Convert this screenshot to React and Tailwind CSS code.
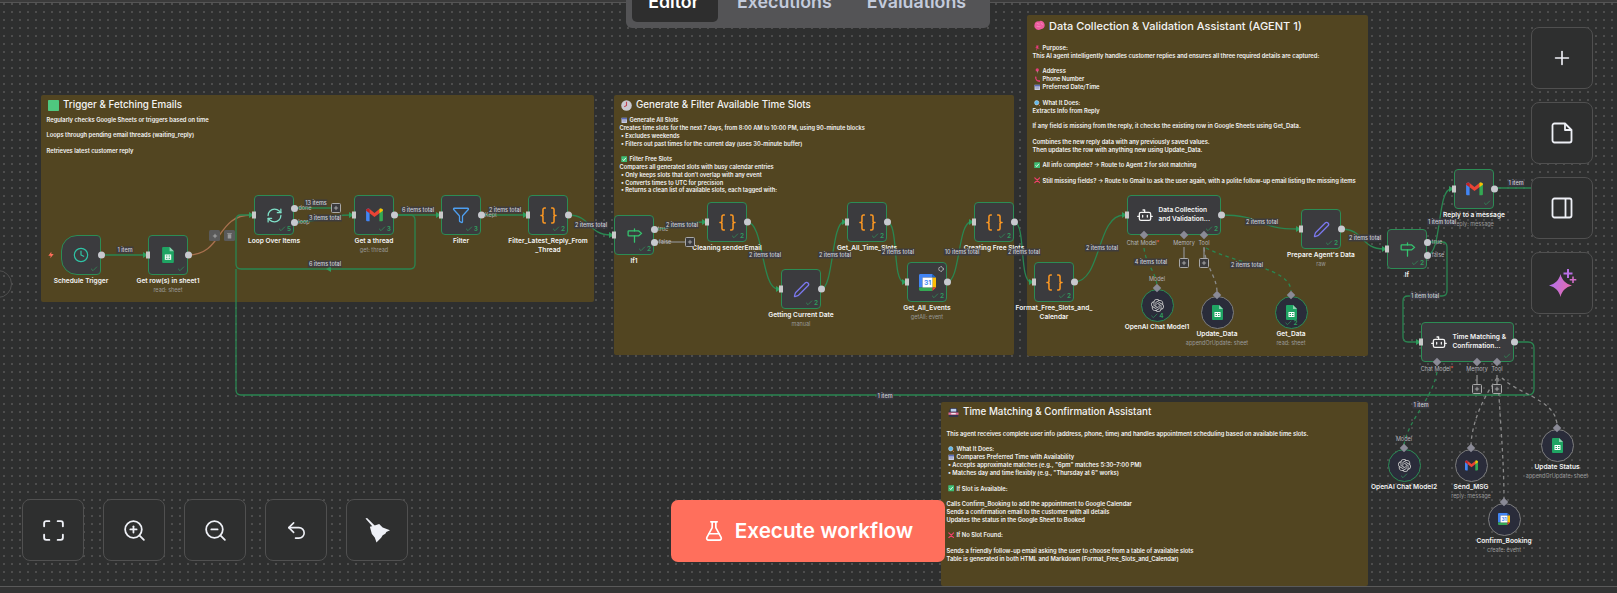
import React from 'react';
import { Plus, ZoomIn, ZoomOut, Undo2, FlaskConical, RefreshCw, Clock, Filter, Pen, Check } from 'lucide-react';
import { SiOpenai } from 'react-icons/si';

const s = (x1, y1, x2, y2) => {
  const d = Math.max(12, Math.abs(x2 - x1) * 0.55);
  return `M${x1} ${y1} C${x1 + d} ${y1} ${x2 - d} ${y2} ${x2} ${y2}`;
};
const G = '#2a8651';
const edges = [
  ['M101 255 H145', G],
  [s(188, 255, 251, 215), '#a8704e'],
  ['M294 208 H331', G],
  [s(294, 222, 351, 215), G],
  ['M394 215 H438', G],
  ['M394 215 H410 Q415 215 415 220 V264 Q415 269 410 269 H241 Q236 269 236 264 V220 Q236 215 241 215 H251', G],
  ['M481 215 H525', G],
  [s(568, 215, 611, 235), G],
  ['M654 229 C675 229 685 222 704 222', G],
  ['M654 242 H685', '#8a8a8a'],
  [s(747, 222, 778, 289), G],
  [s(821, 289, 844, 222), G],
  [s(887, 222, 904, 282), G],
  [s(947, 282, 971, 222), G],
  [s(1014, 222, 1031, 282), G],
  [s(1074, 282, 1124, 215), G],
  [s(1221, 215, 1298, 229), G],
  [s(1341, 229, 1384, 249), G],
  ['M1427 242 H1442 Q1447 242 1447 247 V291 Q1447 296 1442 296 H1408 Q1403 296 1403 301 V337 Q1403 342 1408 342 H1418', G],
  ['M1427 255 C1442 255 1437 189 1451 189', G],
  ['M1494 188 H1531', G],
  ['M236 269 V390 Q236 395 241 395 H1528 Q1534 395 1534 389 V348 Q1534 342 1528 342 H1514', G],
  ['M1184 247 V258', '#8a8a8a'],
  ['M1204 247 V258', '#8a8a8a'],
  ['M1477 375 V384', '#8a8a8a'],
  ['M1497 375 V384', '#8a8a8a'],
];
const dashed = [
  ['M1144 248 C1146 265 1155 270 1157 285', G],
  ['M1204 248 C1206 268 1216 275 1217 291', '#8a8a8a'],
  ['M1206 248 C1240 265 1290 268 1291 291', G],
  ['M1437 372 C1432 400 1408 420 1404 445', G],
  ['M1497 378 C1485 395 1472 420 1471 445', '#8a8a8a'],
  ['M1498 378 C1500 420 1504 460 1504 499', '#8a8a8a'],
  ['M1502 378 C1520 395 1556 400 1557 425', '#8a8a8a'],
];
const arrows = [[148, 255], [254, 215], [354, 215], [441, 215], [528, 215], [614, 235], [707, 222], [781, 289], [847, 222], [907, 282], [974, 222], [1034, 282], [1127, 215], [1301, 229], [1387, 249], [1454, 189], [1421, 342]];

const Sheets = ({ c = 'w-[11px] h-[15px]' }) => (
  <svg viewBox="0 0 22 30" className={c}><path d="M2 0H14L22 8V28a2 2 0 0 1-2 2H2a2 2 0 0 1-2-2V2a2 2 0 0 1 2-2z" fill="#1fa463" /><path d="M14 0L22 8H14z" fill="#8ed1b1" /><path d="M5 14H17V24H5z" fill="#fff" /><path d="M7 16H10V18H7zM12 16H15V18H12zM7 20H10V22H7zM12 20H15V22H12z" fill="#1fa463" /></svg>
);
const Gmail = ({ c = 'w-[17px] h-[14px]' }) => (
  <svg viewBox="0 0 24 20" className={c}>
    <path d="M0 3.5C0 1 3 0 5 1.5V19H1.5A1.5 1.5 0 0 1 0 17.5z" fill="#4285f4" />
    <path d="M24 3.5C24 1 21 0 19 1.5V19H22.5A1.5 1.5 0 0 0 24 17.5z" fill="#34a853" />
    <path d="M5 1.5L12 7L19 1.5V7.5L12 13L5 7.5z" fill="#ea4335" />
    <path d="M19 1.5C21 0 24 1 24 3.5V4L19 7.5z" fill="#fbbc04" />
    <path d="M0 3.5V4L5 7.5V1.5C3 0 0 1 0 3.5z" fill="#c5221f" />
  </svg>
);
const Braces = () => (
  <svg viewBox="0 0 24 24" className="w-[19px] h-[19px]" fill="none" stroke="#ff9922" strokeWidth="1.9" strokeLinecap="round" strokeLinejoin="round"><path d="M8 2.5H7a2 2 0 0 0-2 2v5a2 2 0 0 1-2.5 2.5A2 2 0 0 1 5 14.5v5a2 2 0 0 0 2 2h1" /><path d="M16 2.5h1a2 2 0 0 1 2 2v5a2 2 0 0 0 2.5 2.5 2 2 0 0 0-2.5 2.5v5a2 2 0 0 1-2 2h-1" /></svg>
);
const Sign = () => (
  <svg viewBox="0 0 24 24" className="w-[17px] h-[17px]" fill="none" stroke="#35c46f" strokeWidth="1.8" strokeLinejoin="round" strokeLinecap="round"><path d="M3 6.5a1 1 0 0 1 1-1h14l4 3.5-4 3.5H4a1 1 0 0 1-1-1z" /><path d="M12 2.5v3M12 12.5v9" /></svg>
);
const Bot = () => (
  <svg viewBox="0 0 24 24" className="w-[16px] h-[16px]" fill="none" stroke="#f4f4f4" strokeWidth="1.9" strokeLinejoin="round" strokeLinecap="round"><rect x="3.5" y="8" width="17" height="12" rx="2.5" /><path d="M11.5 8V4.5H9" /><path d="M1 14h2.5M20.5 14H23" /><path d="M8.5 12.5v2.5M15.5 12.5v2.5" /></svg>
);
const GCal = ({ c = 'w-[17px] h-[17px]' }) => (
  <svg viewBox="0 0 24 24" className={c}>
    <path d="M2 0H19V5H5V19H0V2A2 2 0 0 1 2 0z" fill="#4285f4" />
    <path d="M19 0L24 5H19z" fill="#1967d2" />
    <path d="M19 5H24V19H19z" fill="#fbbc04" />
    <path d="M0 19H19V24H2A2 2 0 0 1 0 22z" fill="#34a853" />
    <path d="M19 19H24L19 24z" fill="#ea4335" />
    <path d="M5 5H19V19H5z" fill="#fff" />
    <text x="12" y="15.500" textAnchor="middle" fontSize="9.500" fontWeight="700" fill="#4285f4">31</text>
  </svg>
);
const Pencil = () => <Pen className="w-[17px] h-[17px] text-[#7b78ef]" strokeWidth={1.8} />;
const Oai = () => <SiOpenai className="w-[13px] h-[13px] text-[#c9c9c9]" />;

const Emo = ({ k, big }) => {
  const c = big ? 'w-[11px] h-[11px] shrink-0' : 'w-[6.500px] h-[6.500px] shrink-0';
  const m = {
    green: <rect x="0" y="0" width="24" height="24" rx="1.500" fill="#4fc77f" />,
    clock: <g><circle cx="12" cy="12" r="11.500" fill="#c9c9cf" /><path d="M12 4V12L7 15" stroke="#c2424f" strokeWidth="2.4" fill="none" /></g>,
    brain: <g><path d="M1 11C1 5 6 2 11 3C15 0 22 3 23 9C24.500 14 21 20 15 20C11 23 5 22 3 18C0.500 16 0.500 13 1 11z" fill="#ee5c9e" /><path d="M6 8C9 7 10 10 12 9M15 7C17 8 18 10 19 10M6 14C9 13 11 16 14 14" stroke="#f7a0c8" strokeWidth="1.500" fill="none" /></g>,
    car: <g><path d="M5 2H19L22 10V22H2V10z" fill="#33344a" /><rect x="6" y="4" width="12" height="6" fill="#bcd0ee" /><rect x="1" y="12" width="22" height="5" fill="#e26a92" /><rect x="7" y="13" width="10" height="3" fill="#f3e8ee" /></g>,
    pin: <path d="M8 2H17L15 9L21 13H13L7 23L10 12L4 10L9 8z" fill="#e63c7a" />,
    loc: <g><circle cx="12" cy="7" r="6" fill="#e63c7a" /><path d="M11 10H13L12 23z" fill="#c9c9cf" /></g>,
    phone: <path d="M4 2L9 3L9 9C10 13 13 16 17 16H22V22C12 23 3 14 4 2z" fill="#e63c7a" />,
    cal: <g><rect x="2" y="3" width="20" height="19" fill="#cfd2ea" /><rect x="2" y="3" width="20" height="6" fill="#5a6ab5" /><path d="M5 12H19M5 16H19" stroke="#7b80a8" strokeWidth="2" /></g>,
    mag: <g><circle cx="10" cy="10" r="8" fill="#5fb7ea" stroke="#cfe2f0" strokeWidth="2" /><path d="M16 16L22 22" stroke="#e07a3f" strokeWidth="3" /></g>,
    ok: <g><rect x="1" y="1" width="22" height="22" rx="2" fill="#3fbf75" /><path d="M6 12L10 17L18 7" stroke="#fff" strokeWidth="3" fill="none" /></g>,
    x: <path d="M3 3L21 21M21 3L3 21" stroke="#f0406a" strokeWidth="4.500" strokeLinecap="round" />,
  };
  return <svg viewBox="0 0 24 24" className={c}>{m[k]}</svg>;
};

const Line = ({ l }) => {
  if (l === '') return <div className="h-[7.6px]" />;
  if (Array.isArray(l))
    return (
      <div className="flex items-center h-[8px] gap-[2.500px] pl-[1px]">
        <Emo k={l[0]} />
        <span>{l[1]}</span>
      </div>
    );
  return <div className="h-[7.8px]">{l}</div>;
};

const Note = ({ pos, icon, title, lines, pt, ts = 'text-[9.800px]', bs = 'text-[5.800px]' }) => (
  <div className={`absolute ${pos} bg-[#524521] rounded-[2px] pl-[5.500px] text-[#f4f4f4]`}>
    <div className={`flex items-center h-[20px] pt-[1.500px] gap-[4px] pl-[1.500px] ${ts} font-medium whitespace-nowrap`}>
      <Emo k={icon} big />
      <span>{title}</span>
    </div>
    <div className={`${pt} ${bs} leading-[8px] font-semibold whitespace-nowrap`}>
      {lines.map((l, i) => <Line key={i} l={l} />)}
    </div>
  </div>
);

const Count = ({ n }) => (
  <div className="absolute right-[2px] bottom-[1.500px] flex items-center gap-[1px] text-[6.500px] leading-[8px] font-semibold text-[#2f9d5d]">
    <Check className="w-[8px] h-[8px]" strokeWidth={2} />
    {n ? <span>{n}</span> : null}
  </div>
);

const NodeLabel = ({ children, sub }) => (
  <div className="absolute left-1/2 -translate-x-1/2 top-[calc(100%+2.500px)] w-[120px] text-center">
    <div className="text-[6.600px] leading-[9px] font-semibold text-[#f4f4f4]">{children}</div>
    {sub ? <div className="text-[5.500px] leading-[9px] text-[#9a9a9a]">{sub}</div> : null}
  </div>
);

const Node = ({ pos, children, label, sub, n, shape = 'rounded-[4px]', noIn, out = true, extra }) => (
  <div className={`absolute ${pos} w-[40px] h-[40px] box-border bg-[#3b3b3e] border-[1.500px] border-[#2c8c55] ${shape} flex items-center justify-center`}>
    {children}
    <Count n={n} />
    {!noIn ? <div className="absolute left-[-3.500px] top-1/2 -translate-y-1/2 w-[4px] h-[7px] bg-[#c8c8c8]" /> : null}
    {out ? <div className="absolute right-[-5px] top-1/2 -translate-y-1/2 w-[7px] h-[7px] rounded-full bg-[#c8c9cf]" /> : null}
    {extra}
    <NodeLabel sub={sub}>{label}</NodeLabel>
  </div>
);

const Out = ({ pos }) => <div className={`absolute ${pos} w-[7px] h-[7px] rounded-full bg-[#c8c9cf]`} />;

const Agent = ({ pos, n, l1, l2 }) => (
  <div className={`absolute ${pos} h-[40px] box-border bg-[#3b3b3e] border-[1.500px] border-[#2c8c55] rounded-[4px] flex items-center`}>
    <div className="ml-[8.500px] w-[16px] flex justify-center"><Bot /></div>
    <div className="ml-[6px] text-[6.600px] leading-[9px] font-semibold text-[#f4f4f4] whitespace-nowrap">{l1}<br />{l2}</div>
    <Count n={n} />
    <div className="absolute left-[-3.500px] top-1/2 -translate-y-1/2 w-[4px] h-[7px] bg-[#c8c8c8]" />
    <div className="absolute right-[-5px] top-1/2 -translate-y-1/2 w-[7px] h-[7px] rounded-full bg-[#c8c9cf]" />
  </div>
);

const Circle = ({ pos, ring, children, label, sub, n, chk }) => (
  <div className={`absolute ${pos} w-[33px] h-[33px] box-border rounded-full bg-[#2a2c3a] border-[1.500px] ${ring} flex items-center justify-center`}>
    {children}
    {chk ? (
      <div className="absolute left-1/2 -translate-x-1/2 bottom-[0.500px] flex items-center gap-[1px] text-[6.500px] leading-[8px] font-semibold text-[#2f9d5d]">
        <Check className="w-[8px] h-[8px]" strokeWidth={2} />
        {n ? <span>{n}</span> : null}
      </div>
    ) : null}
    <div className="absolute left-1/2 -translate-x-1/2 top-[-4.500px] w-[6px] h-[6px] rotate-45 bg-[#8a8a96]" />
    <NodeLabel sub={sub}>{label}</NodeLabel>
  </div>
);

const L = ({ pos, children }) => (
  <div className={`absolute ${pos} -translate-x-1/2 -translate-y-1/2 px-[1px] bg-[#3a3a45]/80 text-[5.500px] leading-[7px] text-[#cfcfd8] font-medium whitespace-nowrap`}>{children}</div>
);
const Port = ({ pos, children }) => (
  <div className={`absolute ${pos} -translate-x-1/2 -translate-y-1/2 text-[5.500px] leading-[7px] text-[#b5b5bb] whitespace-nowrap`}>{children}</div>
);
const PlusBox = ({ pos }) => (
  <div className={`absolute ${pos} -translate-x-1/2 -translate-y-1/2 w-[10px] h-[10px] box-border rounded-[1.500px] border border-[#a8a8a8] bg-[#3a3a3c] flex items-center justify-center`}>
    <Plus className="w-[6px] h-[6px] text-[#dedede]" strokeWidth={2.4} />
  </div>
);
const Dia = ({ pos }) => <div className={`absolute ${pos} -translate-x-1/2 -translate-y-1/2 w-[6px] h-[6px] rotate-45 bg-[#8a8a96]`} />;

const Tool = ({ pos, children }) => (
  <button className={`absolute ${pos} w-[62px] h-[62px] box-border rounded-[8px] border border-[#505050] bg-[#2e2f2f] flex items-center justify-center text-[#eef0f6]`}>{children}</button>
);

export default function App() {
  return (
    <div className="relative w-[1617px] h-[593px] overflow-hidden bg-[#2e2f2f] bg-[radial-gradient(#505050_0.7px,transparent_0.8px)] bg-size-[8px_8px] font-['Inter',sans-serif]">
      <div className="absolute left-0 top-0 w-full h-[3px] bg-[#3b3b3b] border-b border-[#555555]" />
      <div className="absolute left-0 top-[586px] w-full h-[7px] bg-[#333333] border-t border-[#5a5a5a]" />
      <div className="absolute left-[-16px] top-[270px] w-[28px] h-[28px] rounded-full border border-[#505050]" />

      <Note pos="left-[41px] top-[95px] w-[553px] h-[207px]" icon="green" title="Trigger & Fetching Emails" pt="pt-[1px]" lines={[
        'Regularly checks Google Sheets or triggers based on time', '', 'Loops through pending email threads (waiting_reply)', '', 'Retrieves latest customer reply',
      ]} />
      <Note pos="left-[614px] top-[95px] w-[400px] h-[260px]" icon="clock" title="Generate & Filter Available Time Slots" pt="pt-[1px]" bs="text-[5.700px]" lines={[
        ['cal', 'Generate All Slots'], 'Creates time slots for the next 7 days, from 8:00 AM to 10:00 PM, using 90-minute blocks', '\u00a0\u2022 Excludes weekends', '\u00a0\u2022 Filters out past times for the current day (uses 30-minute buffer)', '',
        ['ok', 'Filter Free Slots'], 'Compares all generated slots with busy calendar entries', '\u00a0\u2022 Only keeps slots that don\u2019t overlap with any event', '\u00a0\u2022 Converts times to UTC for precision', '\u00a0\u2022 Returns a clean list of available slots, each tagged with:',
      ]} />
      <Note pos="left-[1027px] top-[15px] w-[341px] h-[341px]" icon="brain" title="Data Collection & Validation Assistant (AGENT 1)" pt="pt-[9px]" ts="text-[11px]" lines={[
        ['pin', 'Purpose:'], 'This AI agent intelligently handles customer replies and ensures all three required details are captured:', '',
        ['loc', 'Address'], ['phone', 'Phone Number'], ['cal', 'Preferred Date/Time'], '',
        ['mag', 'What It Does:'], 'Extracts Info from Reply', '', 'If any field is missing from the reply, it checks the existing row in Google Sheets using Get_Data.', '',
        'Combines the new reply data with any previously saved values.', 'Then updates the row with anything new using Update_Data.', '',
        ['ok', 'All info complete? \u2192 Route to Agent 2 for slot matching'], '',
        ['x', 'Still missing fields? \u2192 Route to Gmail to ask the user again, with a polite follow-up email listing the missing items'],
      ]} />
      <Note pos="left-[941px] top-[402px] w-[427px] h-[184px]" icon="car" title="Time Matching & Confirmation Assistant" pt="pt-[8px]" lines={[
        'This agent receives complete user info (address, phone, time) and handles appointment scheduling based on available time slots.', '',
        ['mag', 'What It Does:'], ['cal', 'Compares Preferred Time with Availability'], '\u00a0\u2022 Accepts approximate matches (e.g., "6pm" matches 5:30\u20137:00 PM)', '\u00a0\u2022 Matches day and time flexibly (e.g., "Thursday at 6" works)', '',
        ['ok', 'If Slot is Available:'], '', 'Calls Confirm_Booking to add the appointment to Google Calendar', 'Sends a confirmation email to the customer with all details', 'Updates the status in the Google Sheet to Booked', '',
        ['x', 'If No Slot Found:'], '', 'Sends a friendly follow-up email asking the user to choose from a table of available slots', 'Table is generated in both HTML and Markdown (Format_Free_Slots_and_Calendar)',
      ]} />

      <svg className="absolute left-0 top-0 w-[1617px] h-[593px]" viewBox="0 0 1617 593" fill="none">
        {edges.map(([d, c], i) => <path key={i} d={d} stroke={c} strokeWidth="1.300" />)}
        {dashed.map(([d, c], i) => <path key={i} d={d} stroke={c} strokeWidth="1.300" strokeDasharray="3.500 3.500" />)}
        {arrows.map(([x, y], i) => <path key={i} d={`M${x - 5} ${y - 3} L${x} ${y} L${x - 5} ${y + 3}z`} fill="#2f9d5d" />)}
        <path d="M326 269 L331 266 V272z" fill="#2f9d5d" />
      </svg>

      <svg viewBox="0 0 24 24" className="absolute left-[47px] top-[251px] w-[8px] h-[8px]" fill="#ff6d5a"><path d="M13 2L4 14h7l-1 8 10-13h-7z" /></svg>

      <Node pos="left-[61px] top-[235px]" shape="rounded-[4px] rounded-l-[16px]" label="Schedule Trigger" noIn><Clock className="w-[16px] h-[16px] text-[#2fc4a6]" strokeWidth={1.8} /></Node>
      <Node pos="left-[148px] top-[235px]" label="Get row(s) in sheet1" sub="read: sheet"><Sheets c="w-[12px] h-[16px]" /></Node>
      <Node pos="left-[254px] top-[195px]" label="Loop Over Items" n="5" out={false}><RefreshCw className="w-[17px] h-[17px] text-[#7fe0c8]" strokeWidth={1.8} /></Node>
      <Out pos="left-[290.500px] top-[204.500px]" />
      <Out pos="left-[290.500px] top-[218.500px]" />
      <Node pos="left-[354px] top-[195px]" label="Get a thread" sub="get: thread" n="3"><Gmail /></Node>
      <Node pos="left-[441px] top-[195px]" label="Filter" n="3"><Filter className="w-[18px] h-[18px] text-[#4e9ff0]" strokeWidth={1.7} /></Node>
      <Node pos="left-[528px] top-[195px]" label={<>Filter_Latest_Reply_From<br />_Thread</>} n="2"><Braces /></Node>
      <Node pos="left-[614px] top-[215px]" label="If1" n="2" out={false}><Sign /></Node>
      <Out pos="left-[650.500px] top-[225.500px]" />
      <Out pos="left-[650.500px] top-[238.500px]" />
      <Node pos="left-[707px] top-[202px]" label="Cleaning senderEmail" n="2"><Braces /></Node>
      <Node pos="left-[781px] top-[269px]" label="Getting Current Date" sub="manual" n="2"><Pencil /></Node>
      <Node pos="left-[847px] top-[202px]" label="Get_All_Time_Slots" n="2"><Braces /></Node>
      <Node pos="left-[907px] top-[262px]" label="Get_All_Events" sub="getAll: event" n="2" extra={
        <svg viewBox="0 0 12 12" className="absolute right-[2.500px] top-[2.500px] w-[6px] h-[6px]" fill="none" stroke="#eeeeee" strokeWidth="1.800" strokeDasharray="3 1.500"><circle cx="6" cy="6" r="4.500" /></svg>
      }><GCal /></Node>
      <Node pos="left-[974px] top-[202px]" label="Creating Free Slots" n="2"><Braces /></Node>
      <Node pos="left-[1034px] top-[262px]" label={<>Format_Free_Slots_and_<br />Calendar</>} n="2"><Braces /></Node>
      <Agent pos="left-[1127px] top-[195px] w-[94px]" n="2" l1="Data Collection" l2="and Validation..." />
      <Node pos="left-[1301px] top-[209px]" label="Prepare Agent's Data" sub="raw" n="2"><Pencil /></Node>
      <Node pos="left-[1387px] top-[229px]" label="If" n="2" out={false}><Sign /></Node>
      <Out pos="left-[1423.500px] top-[238.500px]" />
      <Out pos="left-[1423.500px] top-[251.500px]" />
      <Node pos="left-[1454px] top-[169px]" label="Reply to a message" sub="reply: message"><Gmail /></Node>
      <Agent pos="left-[1421px] top-[322px] w-[93px]" l1="Time Matching &" l2="Confirmation..." />

      <Circle pos="left-[1140.500px] top-[288.500px]" ring="border-[#2c8c55]" label="OpenAI Chat Model1" n="4" chk><Oai /></Circle>
      <Circle pos="left-[1200.500px] top-[295.500px]" ring="border-[#7d7d7d]" label="Update_Data" sub="appendOrUpdate: sheet"><Sheets /></Circle>
      <Circle pos="left-[1274.500px] top-[295.500px]" ring="border-[#2c8c55]" label="Get_Data" sub="read: sheet" n="2" chk><Sheets /></Circle>
      <Circle pos="left-[1387.500px] top-[448.500px]" ring="border-[#2c8c55]" label="OpenAI Chat Model2" chk><Oai /></Circle>
      <Circle pos="left-[1454.500px] top-[448.500px]" ring="border-[#7d7d7d]" label="Send_MSG" sub="reply: message"><Gmail c="w-[13px] h-[11px]" /></Circle>
      <Circle pos="left-[1487.500px] top-[502.500px]" ring="border-[#7d7d7d]" label="Confirm_Booking" sub="create: event"><GCal c="w-[12px] h-[12px]" /></Circle>
      <Circle pos="left-[1540.500px] top-[428.500px]" ring="border-[#7d7d7d]" label="Update Status" sub="appendOrUpdate: sheet"><Sheets /></Circle>

      <Dia pos="left-[1144px] top-[235px]" /><Dia pos="left-[1184px] top-[235px]" /><Dia pos="left-[1204px] top-[235px]" />
      <Dia pos="left-[1437px] top-[362px]" /><Dia pos="left-[1477px] top-[362px]" /><Dia pos="left-[1497px] top-[362px]" />

      <Port pos="left-[305px] top-[208px]">done</Port>
      <Port pos="left-[304px] top-[222px]">loop</Port>
      <Port pos="left-[491px] top-[215px]">Kept</Port>
      <Port pos="left-[663px] top-[229px]">true</Port>
      <Port pos="left-[665px] top-[242px]">false</Port>
      <Port pos="left-[1437px] top-[242px]">true</Port>
      <Port pos="left-[1438px] top-[255px]">false</Port>
      <Port pos="left-[1143px] top-[243px]">Chat Model<span className="text-[#ff5a4a]">*</span></Port>
      <Port pos="left-[1184px] top-[243px]">Memory</Port>
      <Port pos="left-[1204px] top-[243px]">Tool</Port>
      <Port pos="left-[1157px] top-[279px]">Model</Port>
      <Port pos="left-[1437px] top-[369px]">Chat Model<span className="text-[#ff5a4a]">*</span></Port>
      <Port pos="left-[1477px] top-[369px]">Memory</Port>
      <Port pos="left-[1497px] top-[369px]">Tool</Port>
      <Port pos="left-[1404px] top-[439px]">Model</Port>

      <PlusBox pos="left-[336px] top-[208px]" /><PlusBox pos="left-[690px] top-[242px]" />
      <PlusBox pos="left-[1184px] top-[263px]" /><PlusBox pos="left-[1204px] top-[263px]" />
      <PlusBox pos="left-[1477px] top-[389px]" /><PlusBox pos="left-[1497px] top-[389px]" />

      <div className="absolute left-[209px] top-[230px] w-[11px] h-[11px] rounded-[1.500px] bg-[#5a5a5a] flex items-center justify-center"><Plus className="w-[6px] h-[6px] text-[#cccccc]" strokeWidth={2.4} /></div>
      <div className="absolute left-[224px] top-[230px] w-[11px] h-[11px] rounded-[1.500px] bg-[#5a5a5a] flex items-center justify-center">
        <svg viewBox="0 0 12 12" className="w-[7px] h-[7px]" fill="#9a9a9a"><path d="M2 2H10V3.500H2zM3 4H9V11H3z" /></svg>
      </div>

      <L pos="left-[125px] top-[250px]">1 item</L>
      <L pos="left-[316px] top-[203px]">13 items</L>
      <L pos="left-[325px] top-[218px]">3 items total</L>
      <L pos="left-[418px] top-[210px]">6 items total</L>
      <L pos="left-[325px] top-[264px]">6 items total</L>
      <L pos="left-[505px] top-[210px]">2 items total</L>
      <L pos="left-[591px] top-[225px]">2 items total</L>
      <L pos="left-[682px] top-[225px]">2 items total</L>
      <L pos="left-[765px] top-[255px]">2 items total</L>
      <L pos="left-[835px] top-[255px]">2 items total</L>
      <L pos="left-[898px] top-[252px]">2 items total</L>
      <L pos="left-[962px] top-[252px]">10 items total</L>
      <L pos="left-[1024px] top-[252px]">2 items total</L>
      <L pos="left-[1102px] top-[248px]">2 items total</L>
      <L pos="left-[1262px] top-[222px]">2 items total</L>
      <L pos="left-[1365px] top-[238px]">2 items total</L>
      <L pos="left-[1151px] top-[262px]">4 items total</L>
      <L pos="left-[1247px] top-[265px]">2 items total</L>
      <L pos="left-[1442px] top-[222px]">1 item total</L>
      <L pos="left-[1425px] top-[296px]">1 item total</L>
      <L pos="left-[1516px] top-[183px]">1 item</L>
      <L pos="left-[885px] top-[396px]">1 item</L>
      <L pos="left-[1421px] top-[405px]">1 item</L>

      <div className="absolute left-[626px] top-[-6px] w-[364px] h-[34px] rounded-b-[6px] bg-[#545456] flex items-start pl-[6px] text-[17.800px] leading-[22px] font-semibold text-[#c3cbdc]">
        <div className="w-[86px] h-[28px] rounded-b-[5px] bg-[#2e2e2e] text-[#ffffff] flex justify-center pr-[3px]"><span className="mt-[-3px]">Editor</span></div>
        <span className="ml-[19px] mt-[-3px]">Executions</span>
        <span className="ml-[35px] mt-[-3px]">Evaluations</span>
      </div>

      <Tool pos="left-[1531px] top-[27px]"><Plus className="w-[22px] h-[22px]" strokeWidth={1.8} /></Tool>
      <Tool pos="left-[1531px] top-[102px]">
        <svg viewBox="0 0 24 24" className="w-[24px] h-[24px]" fill="none" stroke="currentColor" strokeWidth="1.800" strokeLinejoin="round"><path d="M4.500 2.500H15L21.500 9V19.500a2 2 0 0 1-2 2H4.500a2 2 0 0 1-2-2V4.500a2 2 0 0 1 2-2z" /><path d="M15 2.500V9H21.500" /></svg>
      </Tool>
      <Tool pos="left-[1531px] top-[177px]">
        <svg viewBox="0 0 24 24" className="w-[24px] h-[24px]" fill="none" stroke="currentColor" strokeWidth="1.800"><rect x="2.500" y="2.500" width="19" height="19" rx="2" /><path d="M15.500 2.500V21.500" /></svg>
      </Tool>
      <Tool pos="left-[1531px] top-[252px]">
        <svg viewBox="0 0 32 32" className="w-[32px] h-[32px]">
          <defs><linearGradient id="sp" x1="0" y1="0" x2="1" y2="0.300"><stop offset="0" stopColor="#a873f8" /><stop offset="1" stopColor="#e46bb0" /></linearGradient></defs>
          <path d="M14.500 7C15.800 13 20 17 26 18.500C20 20 15.800 24 14.500 30C13.200 24 9 20 3 18.500C9 17 13.200 13 14.500 7z" fill="url(#sp)" />
          <path d="M21 2H23V5.500H26.500V7.500H23V11H21V7.500H17.500V5.500H21z" fill="#b86fe6" />
          <path d="M26.200 9.500H27.800V12H30.300V13.600H27.800V16H26.200V13.600H23.700V12H26.200z" fill="#d06cc6" />
        </svg>
      </Tool>

      <Tool pos="left-[22px] top-[499px]">
        <svg viewBox="0 0 24 24" className="w-[25px] h-[25px]" fill="none" stroke="currentColor" strokeWidth="1.800" strokeLinecap="round"><path d="M8 3H5a2 2 0 0 0-2 2v3M16 3h3a2 2 0 0 1 2 2v3M21 16v3a2 2 0 0 1-2 2h-3M3 16v3a2 2 0 0 0 2 2h3" /></svg>
      </Tool>
      <Tool pos="left-[103px] top-[499px]"><ZoomIn className="w-[25px] h-[25px]" strokeWidth={1.7} /></Tool>
      <Tool pos="left-[184px] top-[499px]"><ZoomOut className="w-[25px] h-[25px]" strokeWidth={1.7} /></Tool>
      <Tool pos="left-[265px] top-[499px]"><Undo2 className="w-[23px] h-[23px]" strokeWidth={1.7} /></Tool>
      <Tool pos="left-[346px] top-[499px]">
        <svg viewBox="0 0 24 24" className="w-[25px] h-[25px]" fill="currentColor">
          <path d="M0.500 0.500L2 0L9.500 7.500L8 9z" />
          <path d="M4.700 8.300L8.500 7.500L13.600 5.700L17 9L24 11.700L20.500 13.500L19.500 15L17 16.500L15.500 19L11 23.500L9.500 19L6.500 15z" />
        </svg>
      </Tool>

      <button className="absolute left-[671px] top-[500px] w-[274px] h-[62px] rounded-[7px] bg-[#ff6f5c] text-white flex items-center justify-center gap-[10px] text-[20.700px] font-semibold">
        <FlaskConical className="w-[22px] h-[22px]" strokeWidth={1.8} />
        <span>Execute workflow</span>
      </button>
    </div>
  );
}
